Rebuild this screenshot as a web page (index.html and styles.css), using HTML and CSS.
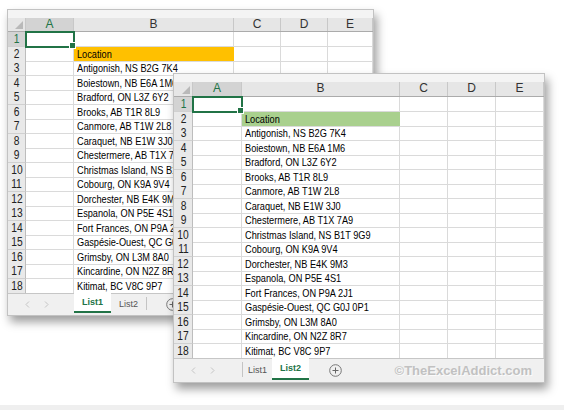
FILE: index.html
```html
<!DOCTYPE html>
<html>
<head>
<meta charset="utf-8">
<link rel="stylesheet" href="styles.css">
</head>
<body>
<div class="desk">
  <div class="win win1">
    <div class="top"></div>
    <div class="row hdr"><div class="corner"></div><div class="ch selh">A</div><div class="ch">B</div><div class="ch">C</div><div class="ch">D</div><div class="ch">E</div></div>
    <div class="row"><div class="rh selh"><span class="n">1</span></div><div class="c sel"></div><div class="c"></div><div class="c"></div><div class="c"></div><div class="c"></div></div>
    <div class="row"><div class="rh"><span class="n">2</span></div><div class="c"></div><div class="c loc-o"><span class="t">Location</span></div><div class="c"></div><div class="c"></div><div class="c"></div></div>
    <div class="row"><div class="rh"><span class="n">3</span></div><div class="c"></div><div class="c"><span class="t">Antigonish, NS B2G 7K4</span></div><div class="c"></div><div class="c"></div><div class="c"></div></div>
    <div class="row"><div class="rh"><span class="n">4</span></div><div class="c"></div><div class="c"><span class="t">Boiestown, NB E6A 1M6</span></div><div class="c"></div><div class="c"></div><div class="c"></div></div>
    <div class="row"><div class="rh"><span class="n">5</span></div><div class="c"></div><div class="c"><span class="t">Bradford, ON L3Z 6Y2</span></div><div class="c"></div><div class="c"></div><div class="c"></div></div>
    <div class="row"><div class="rh"><span class="n">6</span></div><div class="c"></div><div class="c"><span class="t">Brooks, AB T1R 8L9</span></div><div class="c"></div><div class="c"></div><div class="c"></div></div>
    <div class="row"><div class="rh"><span class="n">7</span></div><div class="c"></div><div class="c"><span class="t">Canmore, AB T1W 2L8</span></div><div class="c"></div><div class="c"></div><div class="c"></div></div>
    <div class="row"><div class="rh"><span class="n">8</span></div><div class="c"></div><div class="c"><span class="t">Caraquet, NB E1W 3J0</span></div><div class="c"></div><div class="c"></div><div class="c"></div></div>
    <div class="row"><div class="rh"><span class="n">9</span></div><div class="c"></div><div class="c"><span class="t">Chestermere, AB T1X 7A9</span></div><div class="c"></div><div class="c"></div><div class="c"></div></div>
    <div class="row"><div class="rh"><span class="n">10</span></div><div class="c"></div><div class="c"><span class="t">Christmas Island, NS B1T 9G9</span></div><div class="c"></div><div class="c"></div><div class="c"></div></div>
    <div class="row"><div class="rh"><span class="n">11</span></div><div class="c"></div><div class="c"><span class="t">Cobourg, ON K9A 9V4</span></div><div class="c"></div><div class="c"></div><div class="c"></div></div>
    <div class="row"><div class="rh"><span class="n">12</span></div><div class="c"></div><div class="c"><span class="t">Dorchester, NB E4K 9M3</span></div><div class="c"></div><div class="c"></div><div class="c"></div></div>
    <div class="row"><div class="rh"><span class="n">13</span></div><div class="c"></div><div class="c"><span class="t">Espanola, ON P5E 4S1</span></div><div class="c"></div><div class="c"></div><div class="c"></div></div>
    <div class="row"><div class="rh"><span class="n">14</span></div><div class="c"></div><div class="c"><span class="t">Fort Frances, ON P9A 2J1</span></div><div class="c"></div><div class="c"></div><div class="c"></div></div>
    <div class="row"><div class="rh"><span class="n">15</span></div><div class="c"></div><div class="c"><span class="t">Gaspésie-Ouest, QC G0J 0P1</span></div><div class="c"></div><div class="c"></div><div class="c"></div></div>
    <div class="row"><div class="rh"><span class="n">16</span></div><div class="c"></div><div class="c"><span class="t">Grimsby, ON L3M 8A0</span></div><div class="c"></div><div class="c"></div><div class="c"></div></div>
    <div class="row"><div class="rh"><span class="n">17</span></div><div class="c"></div><div class="c"><span class="t">Kincardine, ON N2Z 8R7</span></div><div class="c"></div><div class="c"></div><div class="c"></div></div>
    <div class="row"><div class="rh"><span class="n">18</span></div><div class="c"></div><div class="c"><span class="t">Kitimat, BC V8C 9P7</span></div><div class="c"></div><div class="c"></div><div class="c"></div></div>
    <div class="tabbar">
      <div class="nav">
        <svg width="5" height="7" viewBox="0 0 5 7"><polyline points="4,0.5 1,3.5 4,6.5" fill="none" stroke="#c4c4c4" stroke-width="1"/></svg>
        <svg width="5" height="7" viewBox="0 0 5 7"><polyline points="1,0.5 4,3.5 1,6.5" fill="none" stroke="#c4c4c4" stroke-width="1"/></svg>
      </div>
      <div class="tab active">List1</div>
      <div class="tab">List2</div>
      <div class="sep"></div>
      <div class="plus p1"><svg width="13" height="13" viewBox="0 0 13 13"><circle cx="6.5" cy="6.5" r="5.8" fill="none" stroke="#777" stroke-width="1"/><path d="M6.5 3.5v6M3.5 6.5h6" stroke="#666" stroke-width="1"/></svg></div>
    </div>
  </div>

  <div class="win win2">
    <div class="top"></div>
    <div class="row hdr"><div class="corner"></div><div class="ch selh">A</div><div class="ch">B</div><div class="ch">C</div><div class="ch">D</div><div class="ch">E</div></div>
    <div class="row"><div class="rh selh"><span class="n">1</span></div><div class="c sel"></div><div class="c"></div><div class="c"></div><div class="c"></div><div class="c"></div></div>
    <div class="row"><div class="rh"><span class="n">2</span></div><div class="c"></div><div class="c loc-g"><span class="t">Location</span></div><div class="c"></div><div class="c"></div><div class="c"></div></div>
    <div class="row"><div class="rh"><span class="n">3</span></div><div class="c"></div><div class="c"><span class="t">Antigonish, NS B2G 7K4</span></div><div class="c"></div><div class="c"></div><div class="c"></div></div>
    <div class="row"><div class="rh"><span class="n">4</span></div><div class="c"></div><div class="c"><span class="t">Boiestown, NB E6A 1M6</span></div><div class="c"></div><div class="c"></div><div class="c"></div></div>
    <div class="row"><div class="rh"><span class="n">5</span></div><div class="c"></div><div class="c"><span class="t">Bradford, ON L3Z 6Y2</span></div><div class="c"></div><div class="c"></div><div class="c"></div></div>
    <div class="row"><div class="rh"><span class="n">6</span></div><div class="c"></div><div class="c"><span class="t">Brooks, AB T1R 8L9</span></div><div class="c"></div><div class="c"></div><div class="c"></div></div>
    <div class="row"><div class="rh"><span class="n">7</span></div><div class="c"></div><div class="c"><span class="t">Canmore, AB T1W 2L8</span></div><div class="c"></div><div class="c"></div><div class="c"></div></div>
    <div class="row"><div class="rh"><span class="n">8</span></div><div class="c"></div><div class="c"><span class="t">Caraquet, NB E1W 3J0</span></div><div class="c"></div><div class="c"></div><div class="c"></div></div>
    <div class="row"><div class="rh"><span class="n">9</span></div><div class="c"></div><div class="c"><span class="t">Chestermere, AB T1X 7A9</span></div><div class="c"></div><div class="c"></div><div class="c"></div></div>
    <div class="row"><div class="rh"><span class="n">10</span></div><div class="c"></div><div class="c"><span class="t">Christmas Island, NS B1T 9G9</span></div><div class="c"></div><div class="c"></div><div class="c"></div></div>
    <div class="row"><div class="rh"><span class="n">11</span></div><div class="c"></div><div class="c"><span class="t">Cobourg, ON K9A 9V4</span></div><div class="c"></div><div class="c"></div><div class="c"></div></div>
    <div class="row"><div class="rh"><span class="n">12</span></div><div class="c"></div><div class="c"><span class="t">Dorchester, NB E4K 9M3</span></div><div class="c"></div><div class="c"></div><div class="c"></div></div>
    <div class="row"><div class="rh"><span class="n">13</span></div><div class="c"></div><div class="c"><span class="t">Espanola, ON P5E 4S1</span></div><div class="c"></div><div class="c"></div><div class="c"></div></div>
    <div class="row"><div class="rh"><span class="n">14</span></div><div class="c"></div><div class="c"><span class="t">Fort Frances, ON P9A 2J1</span></div><div class="c"></div><div class="c"></div><div class="c"></div></div>
    <div class="row"><div class="rh"><span class="n">15</span></div><div class="c"></div><div class="c"><span class="t">Gaspésie-Ouest, QC G0J 0P1</span></div><div class="c"></div><div class="c"></div><div class="c"></div></div>
    <div class="row"><div class="rh"><span class="n">16</span></div><div class="c"></div><div class="c"><span class="t">Grimsby, ON L3M 8A0</span></div><div class="c"></div><div class="c"></div><div class="c"></div></div>
    <div class="row"><div class="rh"><span class="n">17</span></div><div class="c"></div><div class="c"><span class="t">Kincardine, ON N2Z 8R7</span></div><div class="c"></div><div class="c"></div><div class="c"></div></div>
    <div class="row"><div class="rh"><span class="n">18</span></div><div class="c"></div><div class="c"><span class="t">Kitimat, BC V8C 9P7</span></div><div class="c"></div><div class="c"></div><div class="c"></div></div>
    <div class="tabbar">
      <div class="nav">
        <svg width="5" height="7" viewBox="0 0 5 7"><polyline points="4,0.5 1,3.5 4,6.5" fill="none" stroke="#c4c4c4" stroke-width="1"/></svg>
        <svg width="5" height="7" viewBox="0 0 5 7"><polyline points="1,0.5 4,3.5 1,6.5" fill="none" stroke="#c4c4c4" stroke-width="1"/></svg>
      </div>
      <div class="sep"></div>
      <div class="tab t2a">List1</div>
      <div class="tab active">List2</div>
      <div class="plus p2"><svg width="13" height="13" viewBox="0 0 13 13"><circle cx="6.5" cy="6.5" r="5.8" fill="none" stroke="#777" stroke-width="1"/><path d="M6.5 3.5v6M3.5 6.5h6" stroke="#666" stroke-width="1"/></svg></div>
      <div class="mark">©TheExcelAddict.com</div>
    </div>
  </div>
</div>
<div class="band"></div>
</body>
</html>
```

FILE: styles.css
```css
* { box-sizing: border-box; }
html, body { margin: 0; padding: 0; }
body {
  width: 564px;
  height: 410px;
  overflow: hidden;
  background: #fff;
  font-family: "Liberation Sans", Arial, sans-serif;
  color: #1a1a1a;
}
.desk { position: relative; height: 405px; }
.band { height: 5px; background: #efefef; }

.win {
  position: absolute;
  background: #fff;
  border: 1px solid #c2c2c2;
  box-shadow: 3px 6px 9px rgba(0,0,0,0.38);
  display: flex;
  flex-direction: column;
}
.win1 { left: 7px; top: 9px; width: 367px; height: 307px; --cols: 18px 48px 160px 47px 47px 45px; }
.win2 { left: 173px; top: 73px; width: 372px; height: 310px; --cols: 19px 49px 158px 48px 48px 48px; }

.top { height: 8px; background: #f4f4f4; flex: none; }
.row {
  display: grid;
  grid-template-columns: var(--cols);
  height: 14.5px;
  flex: none;
}
.row.hdr { height: 14px; background: #e6e6e6; border-bottom: 1px solid #ababab; }
.win2 .row.hdr { height: 15px; }

.corner { position: relative; border-right: 1px solid #c8c8c8; }
.corner::after {
  content: "";
  position: absolute;
  right: 2px;
  bottom: 2px;
  border-style: solid;
  border-width: 0 0 8px 8px;
  border-color: transparent transparent #b9b9b9 transparent;
}
.ch {
  border-right: 1px solid #c8c8c8;
  text-align: center;
  font-size: 12px;
  line-height: 13px;
  color: #333;
}
.rh {
  background: #e9e9e9;
  border-right: 1px solid #bdbdbd;
  border-bottom: 1px solid #d0d0d0;
  display: flex;
  justify-content: center;
  font-size: 12.5px;
  line-height: 14px;
  color: #222;
}
.n { display: inline-block; transform: scaleX(0.82); transform-origin: 50% 50%; }
.selh { background: #d3d3d3; color: #217346; }
.c {
  border-right: 1px solid #dadada;
  border-bottom: 1px solid #dadada;
  font-size: 11.5px;
  line-height: 14px;
  padding-left: 3px;
  white-space: nowrap;
  color: #000;
  text-align: left;
}
.t { display: inline-block; transform: scaleX(0.8); transform-origin: 0 50%; }
.sel { position: relative; outline: 2px solid #217346; outline-offset: -1px; z-index: 2; }
.sel::after {
  content: "";
  position: absolute;
  right: -3px;
  bottom: -3px;
  width: 5px;
  height: 5px;
  background: #217346;
  border: 1px solid #fff;
}
.loc-o { background: #ffc000; border-right-color: #ffc000; }
.loc-g { background: #a9d08e; border-right-color: #a9d08e; }

.tabbar {
  position: relative;
  flex: 1;
  display: flex;
  align-items: stretch;
  background: #f0f0f0;
  border-top: 1px solid #c6c6c6;
  font-size: 9px;
  color: #555;
}
.nav {
  width: 66px;
  display: flex;
  align-items: center;
  padding-left: 17px;
  gap: 14px;
  flex: none;
}
.win2 .nav { width: 68px; }
.tab {
  display: flex;
  align-items: center;
  padding: 0 8px;
  margin-bottom: 2px;
}
.tab.t2a { padding: 0 5px; }
.tab.active {
  background: #fff;
  color: #217346;
  font-weight: bold;
  margin-top: -1px;
  border-bottom: 2px solid #217346;
  padding: 0 8px;
}
.sep { width: 1px; background: #c4c4c4; margin: 3px 0 5px; }
.plus { display: flex; align-items: center; }
.p1 { padding-left: 19px; }
.p2 { padding-left: 20px; }
.mark {
  position: absolute;
  right: 12px;
  top: 4px;
  font-weight: bold;
  font-size: 13px;
  color: #c1c1c1;
  text-shadow: 1px 1px 0 #fbfbfb;
}
```
